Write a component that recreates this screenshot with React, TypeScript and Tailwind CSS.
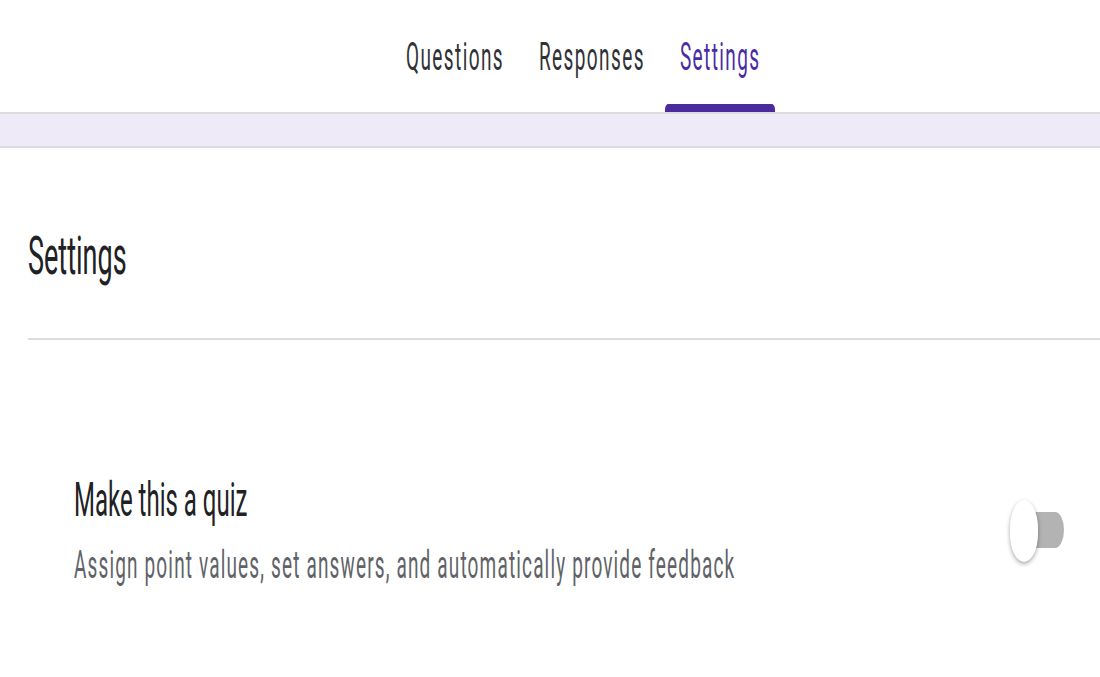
export default function App() {
  const tabs = [
    { label: "Questions", active: false },
    { label: "Responses", active: false },
    { label: "Settings", active: true },
  ];
  return (
    <div className="w-[1100px] h-[677px] overflow-hidden bg-white">
      <div className="w-[1100px] h-[338.5px] origin-top scale-y-[2] font-['Roboto',sans-serif]">
        <div className="h-[56px] flex pl-[391px] gap-[5px]">
          {tabs.map((t) => (
            <div key={t.label} className="flex flex-col h-full px-[15px]">
              <div
                className={
                  "flex-1 flex items-center pt-[4px] text-[19px] leading-none tracking-[1.4px] " +
                  (t.active ? "text-[#4a2ba6]" : "text-[#303236]")
                }
              >
                {t.label}
              </div>
              <div
                className={
                  "h-[4px] -mx-[15px] rounded-t-[3px] " +
                  (t.active ? "bg-[#4a2a9c]" : "bg-transparent")
                }
              />
            </div>
          ))}
        </div>
        <div className="h-[18px] bg-[#efeaf8] border-y border-[#dcdce0]" />
        <div className="pl-[28px] pt-[41px]">
          <h1 className="text-[27px] leading-none text-[#202124]">Settings</h1>
          <div className="mt-[27px] h-px bg-[#dadce0]" />
        </div>
        <div className="flex items-center justify-between pl-[74px] pr-[36px] pt-[68px]">
          <div className="flex flex-col">
            <div className="text-[24px] leading-none text-[#202124]">Make this a quiz</div>
            <div className="mt-[11px] text-[19px] leading-none tracking-[1.15px] text-[#5f6368]">
              Assign point values, set answers, and automatically provide feedback
            </div>
          </div>
          <div className="relative w-[54px] h-[31px]">
            <div className="absolute left-[6px] right-0 top-[6px] h-[18px] rounded-full bg-[#b3b3b3]" />
            <div className="absolute left-0 top-0 w-[28px] h-[31px] rounded-full bg-white shadow-[0_1px_3px_rgba(0,0,0,0.35)]" />
          </div>
        </div>
      </div>
    </div>
  );
}
